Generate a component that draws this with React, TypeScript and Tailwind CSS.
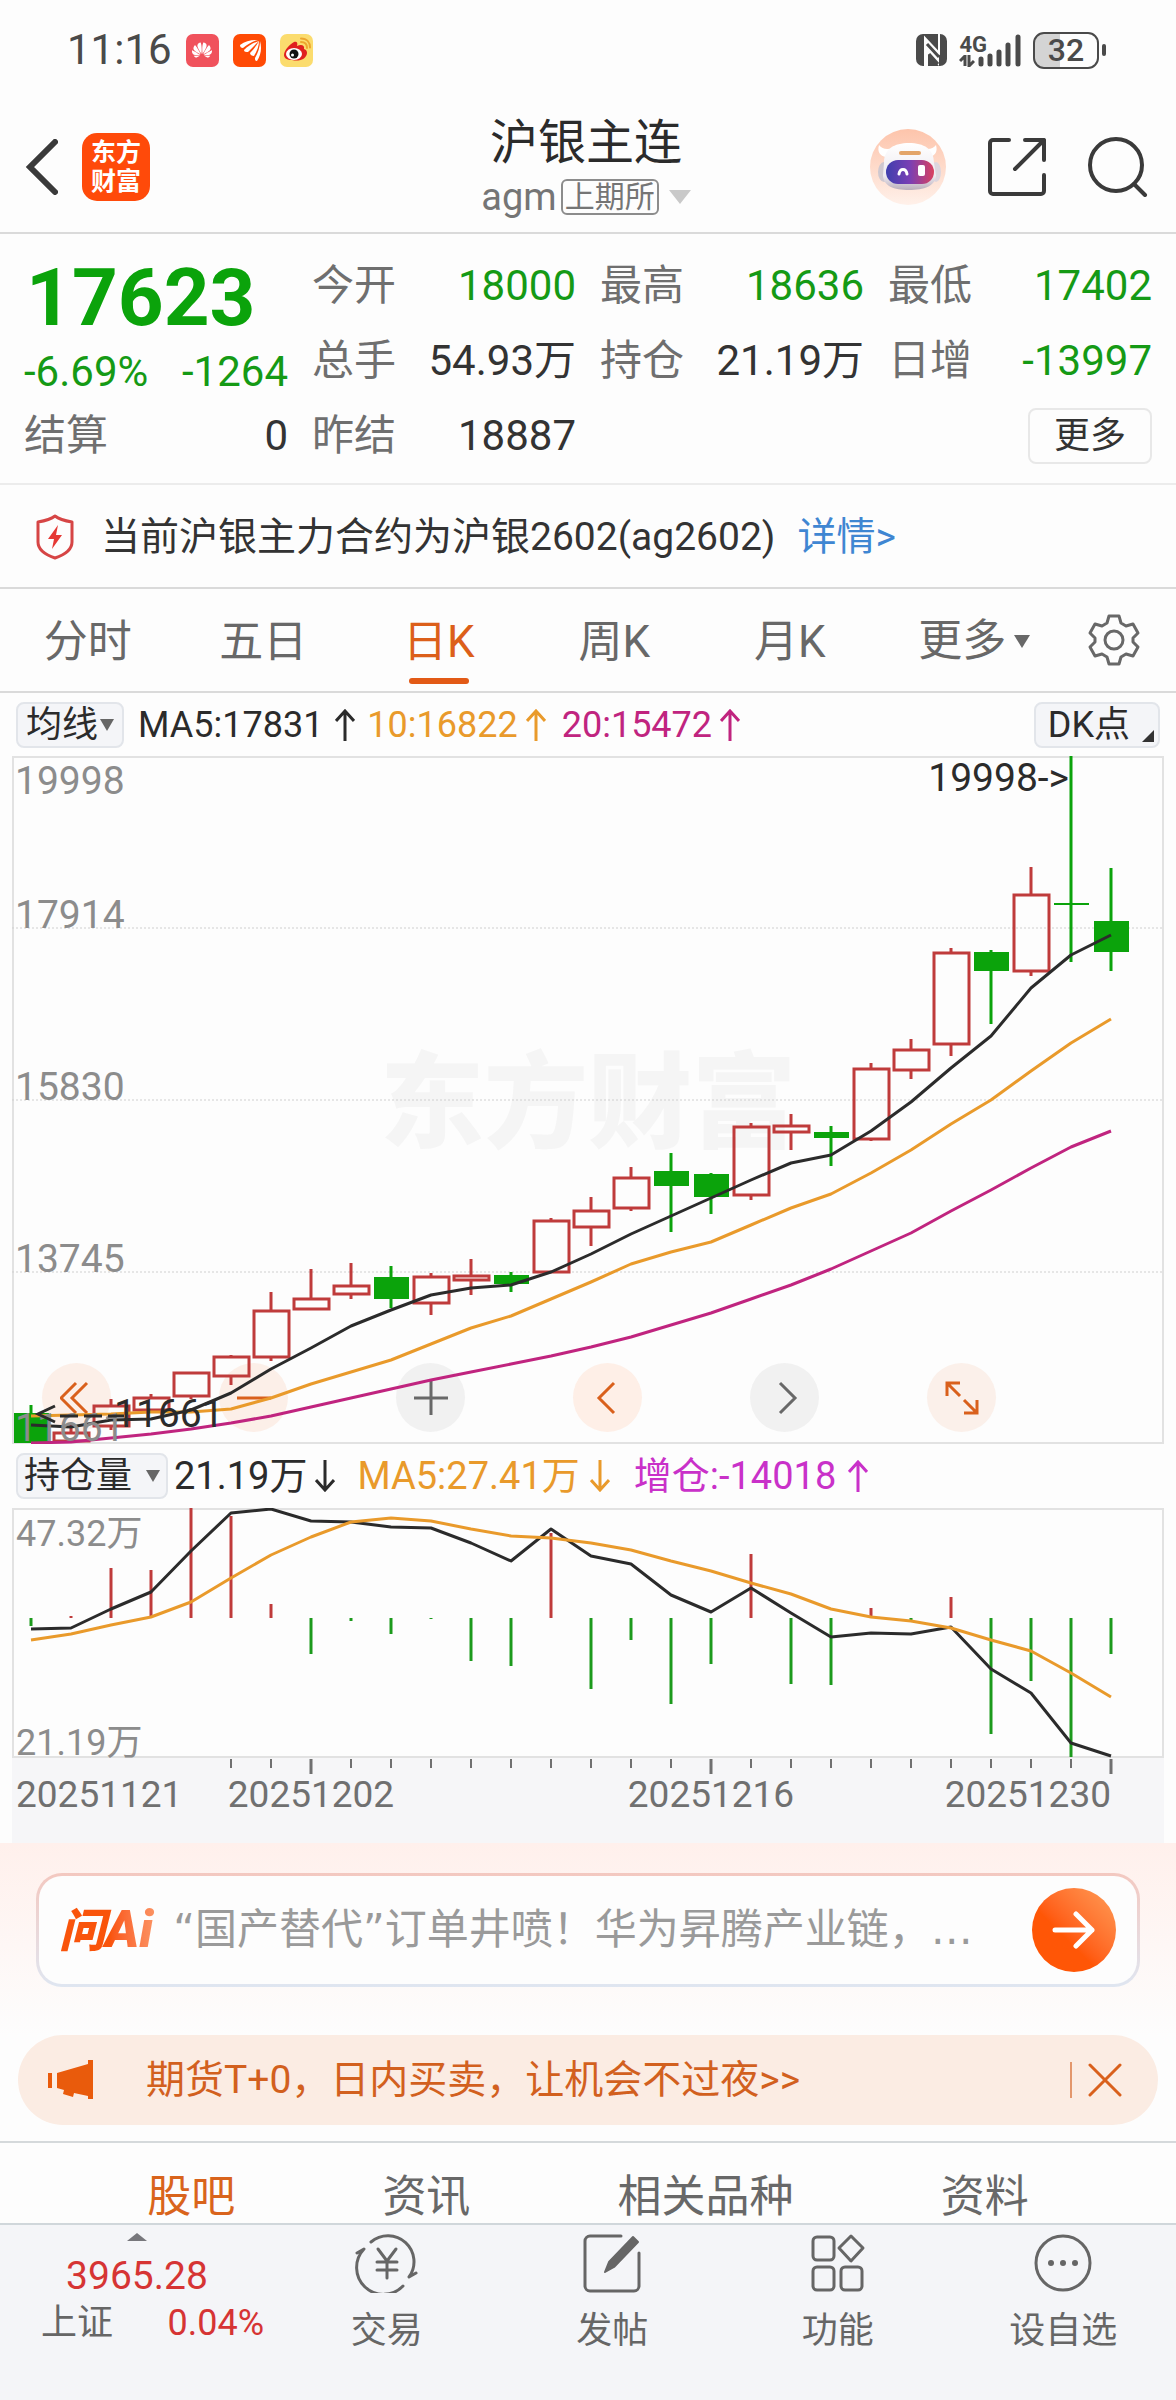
import React from "react";
import { SiHuawei } from "react-icons/si";

const RED = "#bf3b3b";
const GREEN = "#0ba30b";
const DARK = "#2b2b2b";
const AMBER = "#e99a2b";
const MAGENTA = "#c0247f";

const STEP = 40;
const FIRST = 19;
const xAt = (i: number) => FIRST + i * STEP;

type Candle = { up: boolean; high: number; top: number; bottom: number; low: number };

const c = (dir: "u" | "d", high: number, top: number, bottom: number, low: number): Candle => ({
  up: dir === "u",
  high,
  top,
  bottom,
  low,
});

const candles: Candle[] = [
  c("d", 649, 657, 687, 687),
  c("u", 668, 677, 685, 687),
  c("u", 643, 650, 670, 674),
  c("u", 638, 642, 654, 654),
  c("u", 616, 617, 640, 643),
  c("u", 599, 601, 620, 629),
  c("u", 536, 555, 601, 605),
  c("u", 513, 543, 553, 553),
  c("u", 507, 530, 538, 543),
  c("d", 510, 521, 543, 552),
  c("u", 517, 521, 547, 559),
  c("u", 503, 520, 524, 539),
  c("d", 516, 519, 528, 536),
  c("u", 462, 465, 516, 516),
  c("u", 441, 455, 471, 490),
  c("u", 411, 422, 452, 455),
  c("d", 397, 415, 430, 476),
  c("d", 417, 418, 441, 458),
  c("u", 367, 371, 439, 444),
  c("u", 358, 370, 376, 394),
  c("d", 370, 376, 382, 410),
  c("u", 307, 313, 383, 385),
  c("u", 283, 294, 314, 323),
  c("u", 192, 197, 288, 300),
  c("d", 194, 196, 215, 268),
  c("u", 111, 139, 215, 220),
  c("d", 0, 147, 149, 206),
  c("d", 112, 165, 196, 215),
];

const ma5 = [669, 671, 664, 663, 654, 637, 613, 592, 570, 554, 539, 532, 529, 516, 498, 478, 460, 442, 424, 407, 399, 375, 346, 312, 280, 232, 199, 179];
const ma10 = [660, 659, 658, 656, 656, 653, 642, 628, 616, 604, 588, 572, 560, 543, 526, 508, 496, 486, 469, 452, 438, 417, 394, 368, 344, 315, 287, 263];
const ma20 = [687, 686, 682, 678, 673, 667, 660, 651, 642, 633, 624, 616, 608, 600, 591, 581, 569, 557, 543, 529, 513, 495, 477, 455, 434, 412, 391, 375];

const bars = [118, 108, 60, 62, 0, 8, 96, 146, 113, 126, 111, 153, 158, 25, 181, 132, 196, 156, 46, 176, 177, 100, 112, 89, 226, 173, 249, 146];
const holding = [121, 120, 101, 84, 43, 5, 1, 13, 14, 19, 20, 35, 53, 21, 48, 56, 87, 104, 80, 105, 129, 125, 126, 119, 161, 185, 235, 248];
const holdingMa = [132, 126, 117, 109, 94, 70, 47, 29, 14, 10, 13, 21, 28, 30, 35, 42, 53, 63, 75, 86, 101, 109, 113, 120, 132, 143, 165, 189];

const points = (ys: number[]) => ys.map((y, i) => `${xAt(i)},${y}`).join(" ");

function StatusBar() {
  return (
    <div className="flex h-24 items-center justify-between pt-1 pl-[67px] pr-[70px] text-[#4a4a4a]">
      <div className="flex items-center gap-3.5">
        <span className="text-[42px] leading-[44px]">11:16</span>
        <span className="flex size-[33px] flex-col items-center justify-center rounded-[7px] bg-[#f0525c] text-white">
          <SiHuawei className="size-5" />
        </span>
        <svg viewBox="0 0 33 33" className="size-[33px]" aria-hidden="true">
          <rect width="33" height="33" rx="7" fill="#ff4a05" />
          <path d="M7 11C12 7 18 6 25 6c-5 1-10 4-15 8-2 0-3-1-3-3zM11 16c4-4 9-7 15-9-4 4-7 7-11 11-2 0-4 0-4-2zM17 19c4-4 7-8 9-12 0 5-2 10-5 15-2 0-4-1-4-3zM22 24c3-5 5-11 5-17 2 7 1 14-3 20-2 0-2-1-2-3z" fill="#fff" />
        </svg>
        <svg viewBox="0 0 33 33" className="size-[33px]" aria-hidden="true">
          <rect width="33" height="33" rx="7" fill="#fbdc6e" />
          <path d="M4 21c0-5 6-11 10-13 3-1 4 1 3 4 4-2 8-1 7 3 3 1 4 4 2 7-3 5-9 5-14 4-5 0-8-2-8-5z" fill="#e01f1f" />
          <ellipse cx="14" cy="20" rx="8" ry="6" fill="#fff" />
          <circle cx="14" cy="20" r="4.500" fill="#111" />
          <circle cx="12.500" cy="21" r="1.500" fill="#fff" />
          <path d="M21 8c4 0 6 2 6 6M21 4.500c6 0 9 4 9 9" fill="none" stroke="#eda52e" strokeWidth="2" strokeLinecap="round" />
        </svg>
      </div>
      <div className="flex items-center gap-3">
        <svg viewBox="0 0 31 32" className="h-8 w-[31px]" aria-hidden="true">
          <rect width="31" height="32" rx="7" fill="#4a4a4a" />
          <path d="M9 32V4l14 15V0" fill="none" stroke="#fdfdfd" strokeWidth="2" />
          <path d="M9 4l14 15v13L12 20v12H9z" fill="#fdfdfd" />
          <path d="M11 10l12 13M13 20l9 10" stroke="#4a4a4a" strokeWidth="3" />
        </svg>
        <div className="flex items-end">
          <div className="flex flex-col">
            <span className="text-[22px] leading-[20px] font-bold">4G</span>
            <svg viewBox="0 0 16 12" className="h-3 w-4" aria-hidden="true">
              <path d="M6 11V1L1 6M10 0v11l5-5" fill="none" stroke="#4a4a4a" strokeWidth="3" />
            </svg>
          </div>
          <svg viewBox="0 0 44 33" className="-ml-2.5 h-[33px] w-11" aria-hidden="true">
            <g stroke="#4a4a4a" strokeWidth="5" strokeLinecap="round">
              <path d="M4 30v-5M13 30v-8M22 30v-12M31 30V11M41 30V3" />
            </g>
          </svg>
        </div>
        <div className="flex items-center gap-[3px]">
          <span className="flex h-[37px] w-[66px] items-center justify-center rounded-[11px] border-2 border-[#4a4a4a] bg-linear-to-r from-[#d4d4d4] from-40% to-transparent to-40% text-[32px] leading-[32px] font-medium">
            32
          </span>
          <span className="h-3 w-1 rounded-sm bg-[#4a4a4a]" />
        </div>
      </div>
    </div>
  );
}

function RobotIcon() {
  return (
    <svg viewBox="0 0 76 76" className="size-[76px]" aria-hidden="true">
      <defs>
        <linearGradient id="halo" x1="0" y1="0" x2="0" y2="1">
          <stop offset="0" stopColor="#fdc4ab" />
          <stop offset="1" stopColor="#fff1ea" />
        </linearGradient>
        <linearGradient id="shell" x1="0" y1="0" x2="0" y2="1">
          <stop offset="0" stopColor="#ffffff" />
          <stop offset="0.700" stopColor="#eeeaf0" />
          <stop offset="1" stopColor="#b9aebb" />
        </linearGradient>
        <linearGradient id="visor" x1="0" y1="0" x2="1" y2="0">
          <stop offset="0" stopColor="#3f3fae" />
          <stop offset="0.500" stopColor="#7a3fb4" />
          <stop offset="1" stopColor="#d9415f" />
        </linearGradient>
      </defs>
      <circle cx="38" cy="38" r="38" fill="url(#halo)" />
      <ellipse cx="14" cy="43" rx="6" ry="10" fill="#cfc8d0" />
      <ellipse cx="66" cy="43" rx="5" ry="10" fill="#ddd6de" />
      <path d="M9 16c-2 7 1 11 7 12l7-9c-6 2-11 1-14-3zM66 16c2 7-1 11-7 12l-7-9c6 2 11 1 14-3z" fill="#fff" />
      <path d="M14 34c0-14 10-20 25-20s25 6 25 20l2 12c0 11-12 15-27 15S13 57 13 46z" fill="url(#shell)" />
      <rect x="29" y="22" width="22" height="4" rx="2" fill="#e3a468" />
      <rect x="16" y="31" width="48" height="24" rx="12" fill="url(#visor)" />
      <path d="M29 45c1-6 7-6 8 0" fill="none" stroke="#fff" strokeWidth="3" strokeLinecap="round" />
      <rect x="48" y="36" width="7" height="11" rx="2" fill="#fff" />
    </svg>
  );
}

function Header() {
  return (
    <header className="grid h-[138px] grid-cols-3 items-center border-b-2 border-[#dadada] pt-1.5 pr-7 pl-6">
      <div className="flex items-center gap-6">
        <button aria-label="返回">
          <svg viewBox="0 0 34 56" className="h-14 w-[34px]" aria-hidden="true">
            <path d="M31 3L6 28l25 25" fill="none" stroke="#3a3a3a" strokeWidth="6" strokeLinecap="round" />
          </svg>
        </button>
        <a href="#home" className="flex size-[68px] flex-col items-center justify-center rounded-[15px] bg-[#ff4a0a] text-[25px] leading-[29px] font-bold text-white">
          <span>东方</span>
          <span>财富</span>
        </a>
      </div>
      <div className="flex flex-col items-center gap-1">
        <h1 className="text-[48px] leading-[56px] text-[#2b2b2b]">沪银主连</h1>
        <button className="flex items-center gap-1 text-[38px] leading-[44px] text-[#757575]">
          <span>agm</span>
          <span className="rounded-md border-2 border-[#8c8c8c] px-0.5 text-[30px] leading-[32px]">上期所</span>
          <svg viewBox="0 0 22 14" className="ml-1.5 h-3.5 w-[22px]" aria-hidden="true">
            <path d="M0 0h22L11 14z" fill="#c9c9c9" />
          </svg>
        </button>
      </div>
      <div className="flex items-center justify-end gap-[42px]">
        <button aria-label="智能助手">
          <RobotIcon />
        </button>
        <button aria-label="分享">
          <svg viewBox="0 0 58 58" className="size-[58px]" fill="none" stroke="#3a3a3a" strokeWidth="4" strokeLinecap="round" strokeLinejoin="round" aria-hidden="true">
            <path d="M21 2H5a3 3 0 0 0-3 3v48a3 3 0 0 0 3 3h48a3 3 0 0 0 3-3V37M37 2h19v20M56 2L27 31" />
          </svg>
        </button>
        <button aria-label="搜索">
          <svg viewBox="0 0 60 60" className="size-[60px]" fill="none" stroke="#3a3a3a" strokeWidth="4" strokeLinecap="round" aria-hidden="true">
            <circle cx="28" cy="28" r="26" />
            <path d="M46 47l11 11" />
          </svg>
        </button>
      </div>
    </header>
  );
}

function Stat({ label, value, tone }: { label: string; value: string; tone: "down" | "plain" }) {
  return (
    <div className="flex h-[75px] items-center justify-between">
      <dt className="text-[#6f6f6f]">{label}</dt>
      <dd className={tone === "down" ? "text-[#159a15]" : "text-[#333333]"}>{value}</dd>
    </div>
  );
}

function Quote() {
  return (
    <section className="grid grid-cols-4 gap-x-6 border-b-2 border-[#ececec] px-6 pt-3.5 pb-2.5 text-[42px] leading-[48px]">
      <div>
        <div className="flex h-[150px] flex-col">
          <strong className="pl-0.5 text-[80px] leading-[100px] font-bold text-[#0ba30b]">17623</strong>
          <div className="flex justify-between text-[#159a15]">
            <span>-6.69%</span>
            <span>-1264</span>
          </div>
        </div>
        <dl>
          <Stat label="结算" value="0" tone="plain" />
        </dl>
      </div>
      <dl>
        <Stat label="今开" value="18000" tone="down" />
        <Stat label="总手" value="54.93万" tone="plain" />
        <Stat label="昨结" value="18887" tone="plain" />
      </dl>
      <dl>
        <Stat label="最高" value="18636" tone="down" />
        <Stat label="持仓" value="21.19万" tone="plain" />
      </dl>
      <div>
        <dl>
          <Stat label="最低" value="17402" tone="down" />
          <Stat label="日增" value="-13997" tone="down" />
        </dl>
        <div className="flex h-[75px] items-center justify-end">
          <button className="h-14 rounded-lg border-2 border-[#e8e8e8] px-6 text-[36px] leading-[40px] text-[#333333]">更多</button>
        </div>
      </div>
    </section>
  );
}

function Notice() {
  return (
    <section className="flex h-[104px] items-center border-b-2 border-[#dadada] pt-0.5 pl-[35px] text-[39px] leading-[48px] text-[#333333]">
      <svg viewBox="0 0 40 46" className="mr-[26px] h-[46px] w-10" aria-hidden="true">
        <path d="M20 2c5 4 11 5 17 6v20c0 8-8 13-17 16C11 41 3 36 3 28V8c6-1 12-2 17-6z" fill="none" stroke="#d64545" strokeWidth="3" strokeLinejoin="round" />
        <path d="M23 11l-10 14h6l-2 10 10-14h-6z" fill="#e53935" />
      </svg>
      <p>当前沪银主力合约为沪银2602(ag2602)</p>
      <a href="#detail" className="ml-[22px] text-[#3f86d2]">
        详情&gt;
      </a>
    </section>
  );
}

function PeriodTabs() {
  const tabs = ["分时", "五日", "日K", "周K", "月K"];
  return (
    <nav className="grid h-[104px] grid-cols-[30fr_30fr_30fr_30fr_30fr_31fr_20fr] border-b-2 border-[#dadada] text-[44px] leading-[48px] text-[#686868]">
      {tabs.map((t) => (
        <button key={t} className="flex flex-col items-center justify-end pb-[7px]">
          <span className={t === "日K" ? "text-[#dc5f1a]" : ""}>{t}</span>
          <span className={t === "日K" ? "mt-3 h-1.5 w-[60px] rounded-sm bg-[#e25a16]" : "mt-3 h-1.5"} />
        </button>
      ))}
      <button className="flex items-center justify-center gap-2 pt-0.5 pl-3">
        更多
        <svg viewBox="0 0 16 13" className="h-[13px] w-4" aria-hidden="true">
          <path d="M0 0h16L8 13z" fill="#686868" />
        </svg>
      </button>
      <button className="flex items-center justify-center pr-1.5" aria-label="设置">
        <svg viewBox="0 0 52 52" className="size-[52px]" fill="none" stroke="#686868" strokeWidth="3" strokeLinejoin="round" aria-hidden="true">
          <path d="M21 2h10l2 7 5 3 7-2 5 9-5 5v4l5 5-5 9-7-2-5 3-2 7H21l-2-7-5-3-7 2-5-9 5-5v-4l-5-5 5-9 7 2 5-3z" />
          <circle cx="26" cy="26" r="9" />
        </svg>
      </button>
    </nav>
  );
}

function Down() {
  return (
    <svg viewBox="0 0 14 12" className="h-3 w-3.5" aria-hidden="true">
      <path d="M0 0h14L7 12z" fill="#666" />
    </svg>
  );
}

function Arrow({ down = false }: { down?: boolean }) {
  return (
    <svg viewBox="0 0 20 32" className="h-8 w-5" fill="none" stroke="currentColor" strokeWidth="3" aria-label={down ? "下降" : "上升"}>
      <path d={down ? "M10 0v30M1 20l9 10 9-10" : "M10 32V2M1 12l9-10 9 10"} />
    </svg>
  );
}

function ChartControls() {
  const base = "flex size-[69px] items-center justify-center rounded-full";
  const icon = "size-[34px]";
  return (
    <div className="absolute right-[168px] bottom-3 left-[30px] flex justify-between">
      <button className={`${base} bg-[#fcefe8] text-[#d9601c]`} aria-label="最早">
        <svg viewBox="0 0 34 34" className={icon} fill="none" stroke="currentColor" strokeWidth="3" aria-hidden="true">
          <path d="M16 2L1 17l15 15M27 2L12 17l15 15" />
        </svg>
      </button>
      <button className={`${base} bg-[#fcefe8] text-[#d9601c]`} aria-label="缩小">
        <svg viewBox="0 0 34 34" className={icon} stroke="currentColor" strokeWidth="3" aria-hidden="true">
          <path d="M0 17h34" />
        </svg>
      </button>
      <button className={`${base} bg-[#f1f1f1] text-[#686868]`} aria-label="放大">
        <svg viewBox="0 0 34 34" className={icon} stroke="currentColor" strokeWidth="3" aria-hidden="true">
          <path d="M0 17h34M17 0v34" />
        </svg>
      </button>
      <button className={`${base} bg-[#feefe7] text-[#d9601c]`} aria-label="向左">
        <svg viewBox="0 0 34 34" className={icon} fill="none" stroke="currentColor" strokeWidth="3" aria-hidden="true">
          <path d="M23 2L8 17l15 15" />
        </svg>
      </button>
      <button className={`${base} bg-[#f1f1f1] text-[#686868]`} aria-label="向右">
        <svg viewBox="0 0 34 34" className={icon} fill="none" stroke="currentColor" strokeWidth="3" aria-hidden="true">
          <path d="M12 2l15 15-15 15" />
        </svg>
      </button>
      <button className={`${base} bg-[#fbf0ea] text-[#d9601c]`} aria-label="全屏">
        <svg viewBox="0 0 34 34" className={icon} fill="none" stroke="currentColor" strokeWidth="3" aria-hidden="true">
          <path d="M2 15V2h13M2 2l13 13M19 19l13 13M32 19v13H19" />
        </svg>
      </button>
    </div>
  );
}

function PriceChart() {
  return (
    <section>
      <div className="flex h-[63px] items-center justify-between px-4 text-[36px] leading-[40px] text-[#2b2b2b]">
        <div className="flex items-center">
          <button className="mr-3.5 flex h-[46px] items-center gap-0.5 rounded-lg border-2 border-[#e2e5ea] bg-[#f4f5f8] px-2">
            均线
            <Down />
          </button>
          <span className="mr-3 flex items-center gap-3">
            MA5:17831 <Arrow />
          </span>
          <span className="mr-4 flex items-center gap-2">
            <span className="text-[#e99a2b]">10:16822</span>
            <span className="text-[#e99a2b]">
              <Arrow />
            </span>
          </span>
          <span className="flex items-center gap-2 text-[#c0247f]">
            20:15472 <Arrow />
          </span>
        </div>
        <button className="flex h-[46px] items-center gap-3 rounded-lg border-2 border-[#e2e5ea] bg-[#f4f5f8] pr-1 pl-3">
          DK点
          <svg viewBox="0 0 12 12" className="mb-1 size-3 self-end" aria-hidden="true">
            <path d="M12 0v12H0z" fill="#333" />
          </svg>
        </button>
      </div>
      <div className="relative mx-3">
        <ChartControls />
        <svg viewBox="0 0 1152 688" className="pointer-events-none relative block h-auto w-full" role="img" aria-label="日K线图">
          <text x="576" y="384" textAnchor="middle" fontSize="104" fontWeight="900" fill="#f5f5f5">
            东方财富
          </text>
          <rect x="1" y="1" width="1150" height="686" fill="none" stroke="#e2e2e2" strokeWidth="2" />
          {[172, 344, 516].map((y) => (
            <path key={y} d={`M0 ${y}H1152`} stroke="#cfcfcf" strokeWidth="1" strokeDasharray="2 2" />
          ))}
          {candles.map((k, i) => {
            const color = k.up ? RED : GREEN;
            return (
              <g key={i} stroke={color} strokeWidth="3">
                <path d={`M${xAt(i)} ${k.high}V${k.top}M${xAt(i)} ${k.bottom}V${k.low}`} />
                {k.up ? (
                  <rect x={xAt(i) - 17} y={k.top} width="35" height={k.bottom - k.top} fill="none" />
                ) : (
                  <rect x={xAt(i) - 17} y={k.top} width="35" height={k.bottom - k.top} fill={GREEN} stroke="none" />
                )}
              </g>
            );
          })}
          <g fill="none" strokeWidth="3" strokeLinejoin="round">
            <polyline points={points(ma20)} stroke={MAGENTA} />
            <polyline points={points(ma10)} stroke={AMBER} />
            <polyline points={points(ma5)} stroke={DARK} />
          </g>
          <g fontSize="39" fill="#8c8c8c">
            <text x="3" y="38">19998</text>
            <text x="3" y="172">17914</text>
            <text x="3" y="344">15830</text>
            <text x="3" y="516">13745</text>
            <text x="3" y="685">11661</text>
          </g>
          <g fontSize="39" fill={DARK}>
            <text x="1057" y="35" textAnchor="end">19998-&gt;</text>
            <text x="102" y="671">11661</text>
          </g>
          <path d="M43 650l-17 8 17 8M48 660h18M72 660h18M96 660h16" fill="none" stroke={DARK} strokeWidth="3" />
        </svg>
      </div>
    </section>
  );
}

function HoldingChart() {
  return (
    <section>
      <div className="flex h-16 items-center px-4 text-[38px] leading-[44px] text-[#2b2b2b]">
        <button className="mr-1.5 flex h-[46px] items-center gap-3.5 rounded-lg border-2 border-[#e2e5ea] bg-[#f4f5f8] px-1.5 text-[36px] leading-[40px]">
          持仓量
          <Down />
        </button>
        <span className="mr-[22px] flex items-center gap-2">
          21.19万 <Arrow down />
        </span>
        <span className="mr-6 flex items-center gap-2.5 text-[#e99a2b]">
          MA5:27.41万 <Arrow down />
        </span>
        <span className="flex items-center gap-3 text-[#c931c9]">
          增仓:-14018 <Arrow />
        </span>
      </div>
      <div className="mx-3 bg-[#f6f6f8]">
        <svg viewBox="0 0 1152 335" className="block h-auto w-full" role="img" aria-label="持仓量图">
          <rect x="1" y="1" width="1150" height="248" fill="#fdfdfd" stroke="#e2e2e2" strokeWidth="2" />
          <g fontSize="36" fill="#8c8c8c">
            <text x="4" y="38">47.32万</text>
            <text x="4" y="247">21.19万</text>
          </g>
          {bars.map((y, i) => (
            <path key={i} d={`M${xAt(i)} 110V${y}`} stroke={y < 110 ? RED : "#1c9a1c"} strokeWidth="3" />
          ))}
          <g fill="none" strokeWidth="3" strokeLinejoin="round">
            <polyline points={points(holding)} stroke={DARK} />
            <polyline points={points(holdingMa)} stroke={AMBER} />
          </g>
          {bars.map((_, i) =>
            i < 5 ? null : (
              <path key={i} d={`M${xAt(i)} 251v${i % 10 === 7 ? 15 : 9}`} stroke="#707070" strokeWidth={i % 10 === 7 ? 3 : 2} />
            ),
          )}
          <g fontSize="37" fill="#707070">
            <text x="4" y="299">20251121</text>
            <text x={xAt(7)} y="299" textAnchor="middle">20251202</text>
            <text x={xAt(17)} y="299" textAnchor="middle">20251216</text>
            <text x={xAt(27)} y="299" textAnchor="end">20251230</text>
          </g>
        </svg>
      </div>
    </section>
  );
}

function AskBar() {
  return (
    <section className="bg-linear-to-b from-[#fff0ec] to-[#fdfdfd] px-9 pt-[30px] pb-12">
      <div className="rounded-[26px] bg-linear-to-b from-[#f3c8c0] to-[#dfe6f1] p-[3px]">
        <form className="flex h-[108px] items-center rounded-[23px] bg-[#fdfdfd] pr-[21px] pl-5" onSubmit={(e) => e.preventDefault()}>
          <label htmlFor="ask" className="bg-linear-to-r from-[#f9540b] from-50% to-[#fb9a6b] bg-clip-text pr-2 text-[52px] leading-[60px] font-black text-transparent italic">
            <span className="text-[46px]">问</span>Ai
          </label>
          <input
            id="ask"
            type="text"
            placeholder="“国产替代”订单井喷！华为昇腾产业链，…"
            className="ml-3 min-w-0 flex-1 bg-transparent font-['DejaVu_Sans','Noto_Sans_CJK_SC',sans-serif] text-[42px] leading-[56px] outline-none placeholder:text-[#9a9a9a]"
          />
          <button className="ml-5 flex size-[84px] items-center justify-center rounded-full bg-linear-to-tr from-[#ff5606] from-40% to-[#ff9c55]" aria-label="发送">
            <svg viewBox="0 0 44 38" className="h-[38px] w-11" fill="none" stroke="#fff" strokeWidth="5" strokeLinecap="round" strokeLinejoin="round" aria-hidden="true">
              <path d="M3 19h37M24 3l16 16-16 16" />
            </svg>
          </button>
        </form>
      </div>
    </section>
  );
}

function Promo() {
  return (
    <section className="mx-[18px] flex h-[90px] items-center rounded-full bg-[#fbece3] pr-9 pl-[30px] text-[39px] leading-[48px] text-[#d2601e]">
      <svg viewBox="0 0 46 40" className="h-10 w-[46px]" fill="#e95b0c" aria-hidden="true">
        <path d="M0 13h4v15H0zM9 13l31-9V0h5v39h-5v-3l-14-3-1 4-10-3 1-4-7-2z" />
      </svg>
      <a href="#futures" className="ml-[52px] flex-1">
        期货T+0，日内买卖，让机会不过夜&gt;&gt;
      </a>
      <span className="mr-4 h-9 w-0.5 bg-[#e3976c]" />
      <button aria-label="关闭">
        <svg viewBox="0 0 34 34" className="size-[34px]" stroke="#d9601c" strokeWidth="3" strokeLinecap="round" aria-hidden="true">
          <path d="M2 2l30 30M32 2L2 32" />
        </svg>
      </button>
    </section>
  );
}

function ContentTabs() {
  return (
    <nav className="mt-4 flex h-[82px] items-end justify-evenly border-t-2 border-[#d5d9db] text-[44px] leading-[52px] text-[#686868]">
      <a href="#guba" className="text-[#d9641c]">股吧</a>
      <a href="#news">资讯</a>
      <a href="#related">相关品种</a>
      <a href="#data">资料</a>
    </nav>
  );
}

function NavItem({ label, children }: { label: string; children: React.ReactNode }) {
  return (
    <button className="flex flex-1 flex-col items-center gap-4">
      <svg viewBox="0 0 66 60" className="h-[60px] w-[66px]" fill="none" stroke="#666" strokeWidth="3" strokeLinecap="round" strokeLinejoin="round" aria-hidden="true">
        {children}
      </svg>
      <span>{label}</span>
    </button>
  );
}

function BottomBar() {
  return (
    <footer className="flex h-[177px] border-t-2 border-[#d0d7db] bg-[#f4f5f8] pt-2 text-[36px] leading-[44px] text-[#666666]">
      <button className="flex w-[274px] flex-col items-center">
        <svg viewBox="0 0 20 8" className="h-2 w-5" aria-hidden="true">
          <path d="M10 0l10 8H0z" fill="#77777c" />
        </svg>
        <span className="mt-2.5 text-[39px] leading-[50px] text-[#d63434]">3965.28</span>
        <span className="flex w-full items-center justify-between pr-2.5 pl-[41px]">
          <span>上证</span>
          <span className="text-[#d63434]">0.04%</span>
        </span>
      </button>
      <div className="flex flex-1 items-start">
        <NavItem label="交易">
          <path d="M17 9a26 26 0 0 1 38 35l7-4M49 53A26 26 0 0 1 10 16L3 20" />
          <path d="M24 16l9 12 9-12M33 28v17M23 29h20M23 37h20" />
        </NavItem>
        <NavItem label="发帖">
          <path d="M42 3H11a5 5 0 0 0-5 5v45a5 5 0 0 0 5 5h44a5 5 0 0 0 5-5V20" />
          <path d="M26 39l4-10L54 4l5 5-24 25z" fill="#666" strokeWidth="2" />
        </NavItem>
        <NavItem label="功能">
          <rect x="8" y="4" width="21" height="23" rx="4" />
          <rect x="8" y="34" width="21" height="23" rx="4" />
          <rect x="36" y="34" width="21" height="23" rx="4" />
          <path d="M46 3l12 12-12 13-12-13z" />
        </NavItem>
        <NavItem label="设自选">
          <circle cx="33" cy="30" r="27" />
          <g fill="#666" stroke="none">
            <circle cx="21" cy="30" r="3" />
            <circle cx="33" cy="30" r="3" />
            <circle cx="45" cy="30" r="3" />
          </g>
        </NavItem>
      </div>
    </footer>
  );
}

export default function App() {
  return (
    <main className="bg-[#fdfdfd] font-[Roboto,'Noto_Sans_CJK_SC',sans-serif] text-[#333333]">
      <StatusBar />
      <Header />
      <Quote />
      <Notice />
      <PeriodTabs />
      <PriceChart />
      <HoldingChart />
      <AskBar />
      <Promo />
      <ContentTabs />
      <BottomBar />
    </main>
  );
}
